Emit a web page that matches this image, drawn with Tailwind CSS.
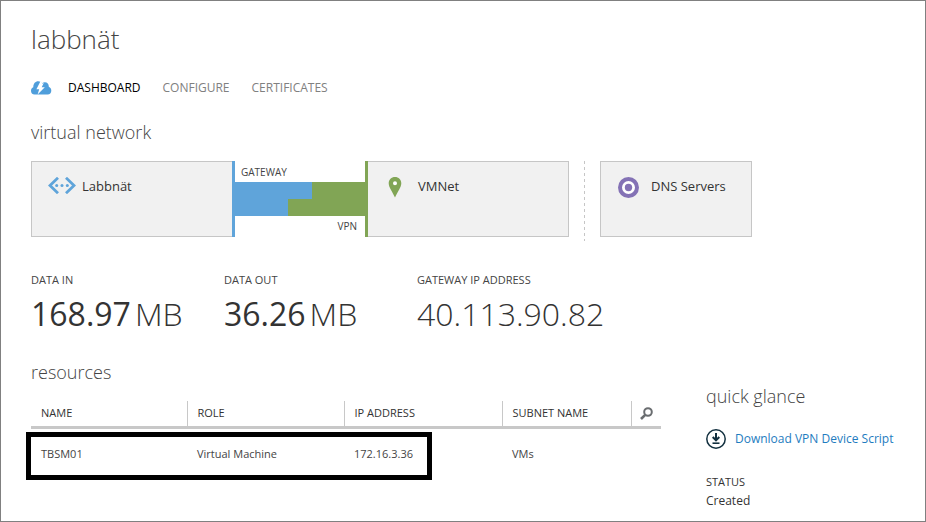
<!DOCTYPE html>
<html lang="en">
<head>
<meta charset="utf-8">
<meta name="viewport" content="width=device-width, initial-scale=1">
<title>labbnät - virtual network</title>
<script src="https://cdn.jsdelivr.net/npm/@tailwindcss/browser@4"></script>
</head>
<body class="bg-white">
<div class="min-h-screen border border-[#808080] pl-[30px] pt-[18px] font-['Segoe_UI','Open_Sans','Noto_Sans',sans-serif] text-[#333]">
  <header>
    <h1 class="text-[26px] leading-10 font-light text-[#444]">labbnät</h1>
    <nav class="mt-[19px] flex h-5 items-center gap-[22px] text-xs text-[#808080]" aria-label="Sections">
      <svg class="-mr-[6px] h-[14px] w-[21px]" viewBox="0 0 21 14" aria-hidden="true">
        <path fill="#4f9edb" d="M3.800 13.500A3.700 3.700 0 0 1 0 9.800C0 8 1 6.700 2.300 6.300 2.200 2.800 4.300.3 7.200.3c1.700 0 3 .7 3.900 2 .8-.7 1.700-1 2.800-1 2.500.1 4 2 3.900 4.500C19.400 6.500 20.300 7.800 20.300 9.700c0 2.200-1.500 3.800-3.600 3.800Z"/>
        <path fill="#fff" d="M9.600 0 5.400 8.200h2.800L6.600 13.500 13.800 6.200H10.700L13 1.600 11.600 2.800Z"/>
      </svg>
      <a href="#" class="text-black" aria-current="page">DASHBOARD</a>
      <a href="#">CONFIGURE</a>
      <a href="#">CERTIFICATES</a>
    </nav>
  </header>
  <main>
    <h2 class="mt-5 text-lg leading-7 font-light text-[#444]">virtual network</h2>
    <section class="mt-[15px] grid max-w-[721px] grid-cols-[1fr_136px_1fr_31px_152px] items-start text-[13px]">
      <div class="flex h-[76px] gap-[6px] border border-r-0 border-[#c6c6c6] bg-[#f1f1f1] pt-[15px] pl-4">
        <svg class="h-[17px] w-7 shrink-0" viewBox="0 0 28 17" fill="none" stroke="#5fa4da" stroke-width="2.800" aria-hidden="true">
          <path d="M10 .8 2 8.500l8 7.700M18 .8 26 8.500l-8 7.700"/>
          <g fill="#5fa4da" stroke="none"><circle cx="8.700" cy="8.500" r="1.500"/><circle cx="14" cy="8.500" r="1.500"/><circle cx="19.300" cy="8.500" r="1.500"/></g>
        </svg>
        <span class="leading-[18px]">Labbnät</span>
      </div>
      <div class="flex h-[76px] flex-col border-r-[3px] border-l-[3px] border-r-[#81a555] border-l-[#5fa4da] text-[10px] text-[#444]">
        <span class="h-[21px] pl-[6px] leading-[22px]">GATEWAY</span>
        <div class="flex h-[17px] bg-[#81a555]"><div class="w-[59%] bg-[#5fa4da]"></div></div>
        <div class="flex h-[17px] bg-[#81a555]"><div class="w-[41%] bg-[#5fa4da]"></div></div>
        <span class="pr-2 text-right leading-5">VPN</span>
      </div>
      <div class="flex h-[76px] gap-4 border border-l-0 border-[#c6c6c6] bg-[#f1f1f1] pt-[15px] pl-5">
        <svg class="h-[21px] w-[14px] shrink-0" viewBox="0 0 14 21" aria-hidden="true"><circle cx="7" cy="6.300" r="3" fill="#fff"/><path fill="#81a555" fill-rule="evenodd" d="M7 0c3.600 0 6.300 2.700 6.300 6.300C13.300 10.300 9.500 15 7 20.500 4.500 15 .7 10.300.7 6.300.7 2.700 3.400 0 7 0Zm0 4.300a2 2 0 1 0 0 4 2 2 0 0 0 0-4Z"/></svg>
        <span class="leading-[18px]">VMNet</span>
      </div>
      <svg class="h-20 w-px justify-self-center" aria-hidden="true"><path d="M.5 0V80" stroke="#c6c6c6" stroke-dasharray="3 3"/></svg>
      <div class="flex h-[76px] gap-3 border border-[#c6c6c6] bg-[#f1f1f1] pt-[15px] pl-[17px]">
        <svg class="h-[21px] w-[21px] shrink-0" viewBox="0 0 21 21" aria-hidden="true"><circle cx="10.500" cy="10.500" r="8.500" fill="#fff" stroke="#8472b5" stroke-width="4"/><circle cx="10.500" cy="10.500" r="3.700" fill="#8472b5"/></svg>
        <span class="leading-[18px]">DNS Servers</span>
      </div>
    </section>
    <dl class="mt-[31px] flex max-w-[721px] text-[11px]">
      <div class="w-[193px]"><dt class="leading-4 text-[#444]">DATA IN</dt><dd class="mt-1 flex gap-1 text-[32px] leading-[44px]">168.97<span class="font-light">MB</span></dd></div>
      <div class="w-[193px]"><dt class="leading-4 text-[#444]">DATA OUT</dt><dd class="mt-1 flex gap-1 text-[32px] leading-[44px]">36.26<span class="font-light">MB</span></dd></div>
      <div><dt class="leading-4 text-[#444]">GATEWAY IP ADDRESS</dt><dd class="mt-1 text-[32px] leading-[44px] font-light">40.113.90.82</dd></div>
    </dl>
    <div class="mt-[22px] flex items-start">
      <section class="flex-1">
        <h2 class="text-lg leading-7 font-light text-[#444]">resources</h2>
        <div class="relative mt-[15px]">
          <table class="w-full table-fixed text-left text-[11px]">
            <colgroup><col class="w-[156px]"><col class="w-[157px]"><col class="w-[158px]"><col><col class="w-[30px]"></colgroup>
            <thead class="border-b-[3px] border-[#c8c8c8]">
              <tr class="h-[26px]">
                <th class="pl-[10px] font-normal">NAME</th>
                <th class="border-l border-[#c8c8c8] pl-[10px] font-normal">ROLE</th>
                <th class="border-l border-[#c8c8c8] pl-[10px] font-normal">IP ADDRESS</th>
                <th class="border-l border-[#c8c8c8] pl-[10px] font-normal">SUBNET NAME</th>
                <th class="border-l border-[#c8c8c8] pl-2 font-normal"><button type="button" class="block" aria-label="Search resources"><svg class="h-[13px] w-[13px]" viewBox="0 0 13 13" fill="none" stroke="#6a6d70" aria-hidden="true"><circle cx="8" cy="5" r="3.800" stroke-width="2"/><path d="M5.200 7.800 1 12" stroke-width="2.600"/></svg></button></th>
              </tr>
            </thead>
            <tbody class="text-[#444]">
              <tr class="h-[52px]"><td class="pl-[10px]">TBSM01</td><td class="pl-[10px]">Virtual Machine</td><td class="pl-[10px]">172.16.3.36</td><td class="pl-[10px]">VMs</td><td></td></tr>
            </tbody>
          </table>
          <div class="pointer-events-none absolute top-[31px] -left-[5px] h-12 w-[406px] border-[5px] border-black"></div>
        </div>
      </section>
      <aside class="ml-[45px] w-[219px] pt-6">
        <h2 class="text-lg leading-7 font-light text-[#444]">quick glance</h2>
        <a href="#" class="mt-[19px] flex h-5 items-center gap-[9px] text-xs text-[#1e7cc0]">
          <svg class="h-5 w-5 shrink-0" viewBox="0 0 20 20" fill="none" stroke="#12303f" aria-hidden="true"><circle cx="10" cy="10" r="9.200" stroke-width="1.500"/><path d="M10 4v7M6.700 8 10 11.300 13.300 8" stroke-width="2"/><path d="M6.500 14.200h7" stroke-width="1.600"/></svg>
          Download VPN Device Script
        </a>
        <dl class="mt-[23px] text-[11px] leading-5"><dt>STATUS</dt><dd class="text-xs leading-[18px]">Created</dd></dl>
      </aside>
    </div>
  </main>
</div>
</body>
</html>
